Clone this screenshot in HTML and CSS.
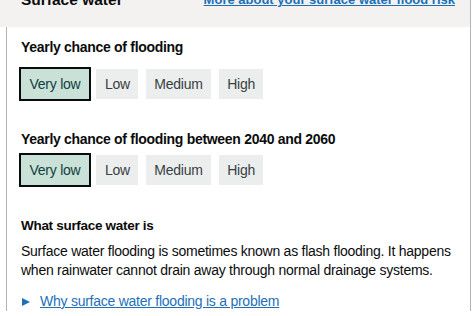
FILE: index.html
```html
<!DOCTYPE html>
<html lang="en">
<head>
  <meta charset="UTF-8" />
  <title>Surface water flood risk</title>
  <link rel="stylesheet" href="styles.css">
</head>
<body>
  <div class="panel">
    <div class="panel-header">
      <h2 class="panel-title">Surface water</h2>
      <a href="#" class="header-link">More about your surface water flood risk</a>
    </div>

    <div class="panel-body">
      <h3 class="risk-heading">Yearly chance of flooding</h3>
      <ul class="risk-scale">
        <li class="risk-tag selected">Very low</li>
        <li class="risk-tag">Low</li>
        <li class="risk-tag">Medium</li>
        <li class="risk-tag">High</li>
      </ul>

      <h3 class="risk-heading future">Yearly chance of flooding between 2040 and 2060</h3>
      <ul class="risk-scale">
        <li class="risk-tag selected">Very low</li>
        <li class="risk-tag">Low</li>
        <li class="risk-tag">Medium</li>
        <li class="risk-tag">High</li>
      </ul>

      <h4 class="info-heading">What surface water is</h4>
      <p class="info-text">Surface water flooding is sometimes known as flash flooding. It happens when rainwater cannot drain away through normal drainage systems.</p>

      <details class="more">
        <summary><span class="arrow"></span><span class="summary-text">Why surface water flooding is a problem</span></summary>
      </details>
    </div>
  </div>
</body>
</html>
```

FILE: styles.css
```css
:root {
  --text: #0b0c0c;
  --link: #1d70b8;
  --border: #b1b4b6;
  --header-bg: #f3f2f1;
  --tag-bg: #eceded;
  --tag-text: #383f43;
  --selected-bg: #c9e1d6;
  --selected-text: #10403c;
}

body {
  margin: 0;
  font-family: 'Liberation Sans', Arial, sans-serif;
  color: var(--text);
  background: #fff;
}

.panel {
  box-sizing: border-box;
  width: 465px;
  margin: -16px 0 0 6px;
  border-left: 1px solid var(--border);
  border-right: 1px solid var(--border);
}

.panel-header {
  display: flex;
  justify-content: space-between;
  align-items: baseline;
  margin-left: -7px;
  padding: 6px 15px 16px 21px;
  background: var(--header-bg);
}

.panel-title {
  margin: 0;
  font-size: 15.5px;
  line-height: 20px;
  font-weight: bold;
}

.header-link {
  font-size: 13px;
  line-height: 20px;
  font-weight: bold;
  color: var(--link);
  position: relative;
  top: -1px;
}

.panel-body {
  padding: 10px 14px 0;
}

.risk-heading {
  margin: 0 0 12px;
  font-size: 14px;
  line-height: 20px;
  font-weight: bold;
  letter-spacing: -0.3px;
}

.risk-heading.future {
  margin: 30px 0 6px;
}

.risk-scale {
  display: flex;
  gap: 7.5px;
  margin: 0;
  padding: 0;
  list-style: none;
}

.risk-tag {
  height: 30px;
  padding: 0 8.5px;
  display: flex;
  align-items: center;
  font-size: 14px;
  letter-spacing: -0.25px;
  background: var(--tag-bg);
  color: var(--tag-text);
}

.risk-tag.selected {
  background: var(--selected-bg);
  color: var(--selected-text);
  box-shadow: 0 0 0 2px var(--text);
}

.info-heading {
  margin: 30.5px 0 6.5px;
  font-size: 13.5px;
  line-height: 20px;
  font-weight: bold;
  letter-spacing: -0.3px;
}

.info-text {
  margin: 0 0 12px;
  font-size: 14px;
  line-height: 18.5px;
  letter-spacing: -0.25px;
}

.more summary {
  display: flex;
  align-items: center;
  list-style: none;
  font-size: 14px;
  line-height: 20px;
  letter-spacing: -0.25px;
  color: var(--link);
  cursor: pointer;
}

.more summary::-webkit-details-marker {
  display: none;
}

.arrow {
  width: 0;
  height: 0;
  margin: 2px 10px 0 1px;
  border-left: 8px solid var(--link);
  border-top: 4.5px solid transparent;
  border-bottom: 4.5px solid transparent;
}

.summary-text {
  text-decoration: underline;
}
```
